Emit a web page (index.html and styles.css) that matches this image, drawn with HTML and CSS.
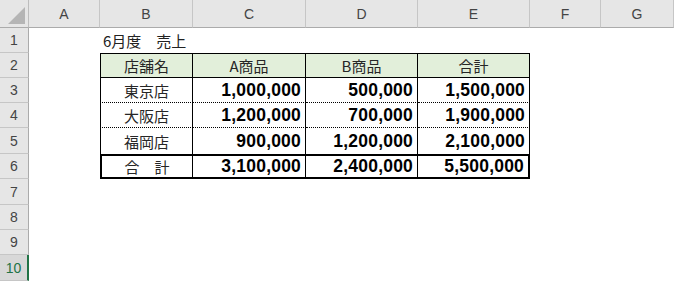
FILE: index.html
```html
<!DOCTYPE html>
<html lang="ja">
<head>
<meta charset="UTF-8">
<title>6月度 売上</title>
<link rel="stylesheet" href="styles.css">
</head>
<body>
<div class="sheet">
  <div class="corner"><span class="corner-mark"></span></div>
  <div class="col-head">A</div>
  <div class="col-head">B</div>
  <div class="col-head">C</div>
  <div class="col-head">D</div>
  <div class="col-head">E</div>
  <div class="col-head">F</div>
  <div class="col-head">G</div>

  <div class="row-head">1</div>
  <div class="row-head">2</div>
  <div class="row-head">3</div>
  <div class="row-head">4</div>
  <div class="row-head">5</div>
  <div class="row-head">6</div>
  <div class="row-head">7</div>
  <div class="row-head">8</div>
  <div class="row-head">9</div>
  <div class="row-head active">10</div>

  <div class="title">6月度　売上</div>

  <table class="sales">
    <colgroup>
      <col class="c-shop"><col class="c-num"><col class="c-num2"><col class="c-num2">
    </colgroup>
    <tr class="head">
      <td>店舗名</td><td>A商品</td><td>B商品</td><td>合計</td>
    </tr>
    <tr class="line">
      <td class="shop">東京店</td><td class="num">1,000,000</td><td class="num">500,000</td><td class="num">1,500,000</td>
    </tr>
    <tr class="line">
      <td class="shop">大阪店</td><td class="num">1,200,000</td><td class="num">700,000</td><td class="num">1,900,000</td>
    </tr>
    <tr class="line last">
      <td class="shop">福岡店</td><td class="num">900,000</td><td class="num">1,200,000</td><td class="num">2,100,000</td>
    </tr>
    <tr class="total">
      <td class="shop">合　計</td><td class="num">3,100,000</td><td class="num">2,400,000</td><td class="num">5,500,000</td>
    </tr>
  </table>
</div>
</body>
</html>
```

FILE: styles.css
```css
body {
  margin: 0;
  background: #ffffff;
  font-family: "Liberation Sans", Arial, sans-serif;
}

/* worksheet: row header + columns A..G, header row + rows 1..10 */
.sheet {
  display: grid;
  grid-template-columns: 29px 71px 93px 113px 112px 112px 71px 1fr;
  grid-template-rows: 28px 25px 25px 25px 25px 26px 25px 26px 25px 25px 26px;
  width: 674px;
  height: 282px;
  overflow: hidden;
}

.corner, .col-head, .row-head {
  box-sizing: border-box;
  background: #e6e6e6;
  color: #444444;
  font-size: 14px;
  display: flex;
  align-items: center;
  justify-content: center;
}

.corner {
  position: relative;
  border-right: 1px solid #bdbdbd;
  border-bottom: 1px solid #ababab;
}
  .corner-mark {
    position: absolute;
    right: 3px;
    bottom: 3px;
    width: 17px;
    height: 17px;
    background: #b5b5b5;
    clip-path: polygon(100% 0, 100% 100%, 0 100%);
  }

.col-head {
  border-right: 1px solid #c6c6c6;
  border-bottom: 1px solid #ababab;
  padding-top: 1px;
}

.row-head {
  grid-column: 1;
  border-right: 1px solid #ababab;
  border-bottom: 1px solid #c6c6c6;
}

.row-head.active {
  background: #d8d8d8;
  color: #217346;
  border-right: 2px solid #217346;
}

.title {
  grid-column: 3 / 6;
  grid-row: 2;
  padding-left: 3px;
  font-family: "Noto Sans CJK JP", sans-serif;
  font-size: 15px;
  color: #222222;
  display: flex;
  align-items: center;
}

/* sales table, sits on B2:E6 */
.sales {
  grid-column: 3 / 7;
  grid-row: 3 / 8;
  align-self: start;
  border-collapse: separate;
  border-spacing: 0;
  table-layout: fixed;
  width: 430px;
}
  .c-shop { width: 93px; }
  .c-num { width: 113px; }
  .c-num2 { width: 112px; }

.sales td {
  box-sizing: border-box;
  padding: 0 4px 0 0;
  border-right: 1px solid #000000;
  white-space: nowrap;
  vertical-align: middle;
}
.sales td:first-child {
  border-left: 1px solid #000000;
}

.sales tr.head td {
  height: 25px;
  background: #e2efda;
  border-top: 1px solid #000000;
  border-bottom: 1px solid #000000;
  text-align: center;
  padding: 0;
  font-family: "Noto Sans CJK JP", sans-serif;
  font-size: 15px;
  color: #262626;
}

.sales tr.line td {
  height: 25px;
  border-bottom: 1px dotted #000000;
}
.sales tr.line.last td {
  height: 26px;
  border-bottom: none;
}

.sales tr.total td {
  height: 25px;
  border-top: 2px solid #000000;
  border-bottom: 2px solid #000000;
}
.sales tr.total td:first-child {
  border-left: 2px solid #000000;
}
.sales tr.total td:last-child {
  border-right: 2px solid #000000;
}

.sales td.shop {
  text-align: center;
  padding: 0;
  font-family: "Noto Sans CJK JP", sans-serif;
  font-size: 15px;
  color: #262626;
}

.sales td.num {
  text-align: right;
  font-weight: bold;
  font-size: 17.5px;
  letter-spacing: 0.2px;
  color: #000000;
}
```
